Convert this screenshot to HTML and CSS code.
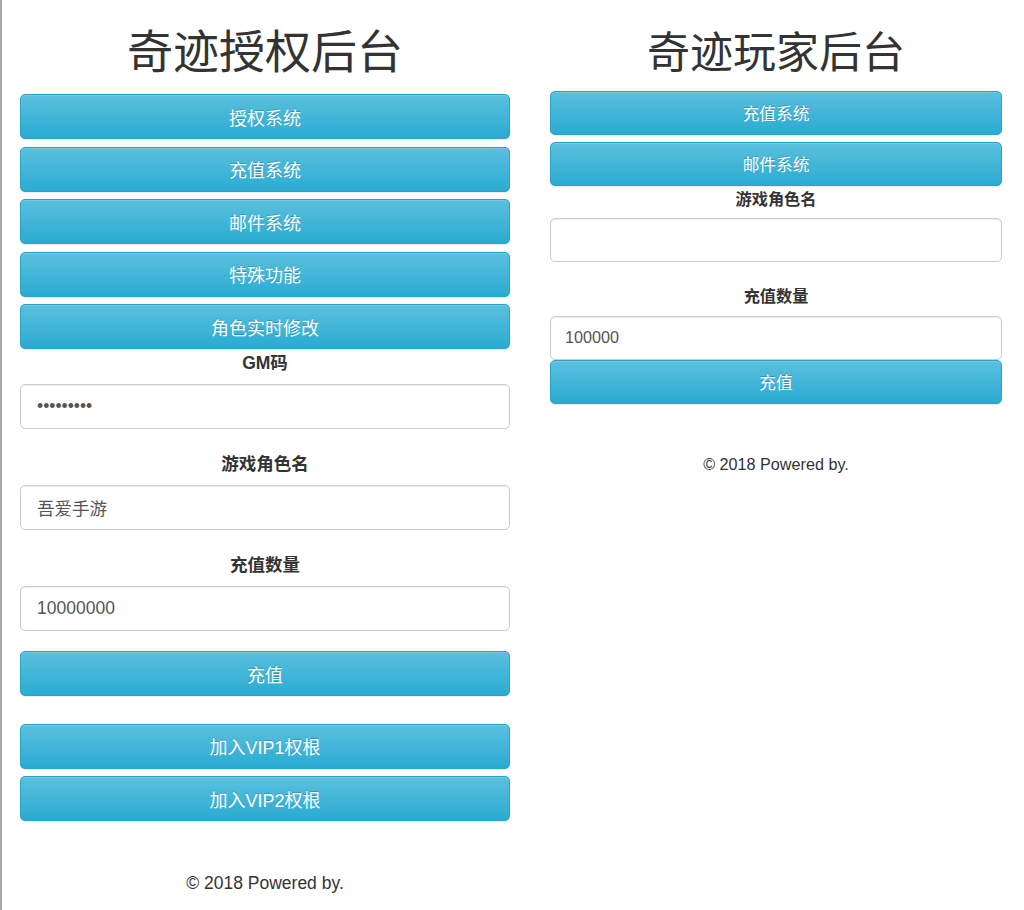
FILE: index.html
```html
<!DOCTYPE html>
<html lang="zh-CN">
<head>
<meta charset="utf-8">
<title>奇迹后台</title>
<link rel="stylesheet" href="styles.css">
</head>
<body>
<div class="page">
  <section class="panel panel-left">
    <h1 class="title">奇迹授权后台</h1>
    <div class="btn-stack">
      <button class="btn">授权系统</button>
      <button class="btn">充值系统</button>
      <button class="btn">邮件系统</button>
      <button class="btn">特殊功能</button>
      <button class="btn">角色实时修改</button>
    </div>
    <div class="field field-first">
      <label class="label">GM码</label>
      <input class="input" type="password" value="123456789">
    </div>
    <div class="field">
      <label class="label">游戏角色名</label>
      <input class="input" type="text" value="吾爱手游">
    </div>
    <div class="field">
      <label class="label">充值数量</label>
      <input class="input" type="text" value="10000000">
    </div>
    <button class="btn btn-submit">充值</button>
    <div class="btn-stack vip-stack">
      <button class="btn">加入VIP1权根</button>
      <button class="btn">加入VIP2权根</button>
    </div>
    <footer class="footer">© 2018 Powered by.</footer>
  </section>

  <section class="panel panel-right">
    <h1 class="title">奇迹玩家后台</h1>
    <div class="btn-stack">
      <button class="btn">充值系统</button>
      <button class="btn">邮件系统</button>
    </div>
    <div class="field field-first">
      <label class="label">游戏角色名</label>
      <input class="input" type="text" value="">
    </div>
    <div class="field field-last">
      <label class="label">充值数量</label>
      <input class="input" type="text" value="100000">
    </div>
    <button class="btn btn-submit">充值</button>
    <footer class="footer">© 2018 Powered by.</footer>
  </section>
</div>
</body>
</html>
```

FILE: styles.css
```css
* { box-sizing: border-box; }

html, body { height: 100%; }

body {
  margin: 0;
  background: #fff;
  color: #333;
  font-family: "Liberation Sans", "Noto Sans CJK SC", sans-serif;
  border-left: 2px solid #a9a9a9;
}

.page {
  display: flex;
  align-items: flex-start;
}

.panel {
  display: flex;
  flex-direction: column;
}

.title {
  margin: 0;
  font-family: "Noto Sans CJK SC", "Liberation Sans", sans-serif;
  font-weight: 400;
  text-align: center;
  color: #333;
}

.btn-stack {
  display: flex;
  flex-direction: column;
}

.btn {
  display: block;
  width: 100%;
  margin: 0;
  padding: 0;
  border: 1px solid #28a4c9;
  background-color: #2aabd2;
  background-image: linear-gradient(to bottom, #5bc0de 0, #2aabd2 100%);
  color: #fff;
  font-family: "Liberation Sans", "Noto Sans CJK SC", sans-serif;
  text-shadow: 0 -1px 0 rgba(0, 0, 0, .2);
  box-shadow: inset 0 1px 0 rgba(255, 255, 255, .15), 0 1px 1px rgba(0, 0, 0, .075);
  text-align: center;
  cursor: pointer;
}

.field {
  display: flex;
  flex-direction: column;
}

.label {
  display: block;
  font-weight: 700;
  text-align: center;
  color: #333;
}

.input {
  display: block;
  width: 100%;
  margin: 0;
  border: 1px solid #ccc;
  background: #fff;
  color: #555;
  font-family: "Liberation Sans", "Noto Sans CJK SC", sans-serif;
  box-shadow: inset 0 1px 1px rgba(0, 0, 0, .075);
  outline: none;
}

.footer {
  text-align: center;
  color: #333;
}

/* Left panel (larger scale) */
.panel-left {
  width: 490px;
  margin-left: 18px;
}
.panel-left .title {
  font-size: 46px;
  line-height: 50px;
  height: 50px;
  margin-top: 23px;
  margin-bottom: 21px;
}
.panel-left .btn-stack { gap: 7.5px; }
.panel-left .btn {
  height: 45px;
  font-size: 18px;
  border-radius: 5px;
}
.panel-left .field { margin-top: 22px; }
.panel-left .field-first { margin-top: 0.5px; }
.panel-left .label {
  font-size: 17.5px;
  line-height: 26px;
  height: 26px;
  margin-bottom: 8px;
}
.panel-left .input {
  height: 45px;
  padding: 0 16px;
  font-size: 17.5px;
  border-radius: 5px;
}
.panel-left .btn-submit { margin-top: 20.5px; }
.panel-left .vip-stack { margin-top: 27.5px; }
.panel-left .footer {
  font-size: 17.5px;
  line-height: 26px;
  margin-top: 49px;
}

/* Right panel (smaller scale) */
.panel-right {
  width: 452px;
  margin-left: 40px;
}
.panel-right .title {
  font-size: 43px;
  line-height: 46px;
  height: 46px;
  margin-top: 25.5px;
  margin-bottom: 19px;
}
.panel-right .btn-stack { gap: 7px; }
.panel-right .btn {
  height: 44px;
  font-size: 16.7px;
  border-radius: 5px;
}
.panel-right .field { margin-top: 22px; }
.panel-right .field-first { margin-top: 1px; }
.panel-right .label {
  font-size: 16.2px;
  line-height: 24px;
  height: 24px;
  margin-bottom: 7.5px;
}
.panel-right .input {
  height: 44px;
  padding: 0 14px;
  font-size: 16.2px;
  border-radius: 5px;
}
.panel-right .btn-submit { margin-top: 0; height: 44.5px; }
.panel-right .footer {
  font-size: 16.2px;
  line-height: 24px;
  margin-top: 47.5px;
}
```
